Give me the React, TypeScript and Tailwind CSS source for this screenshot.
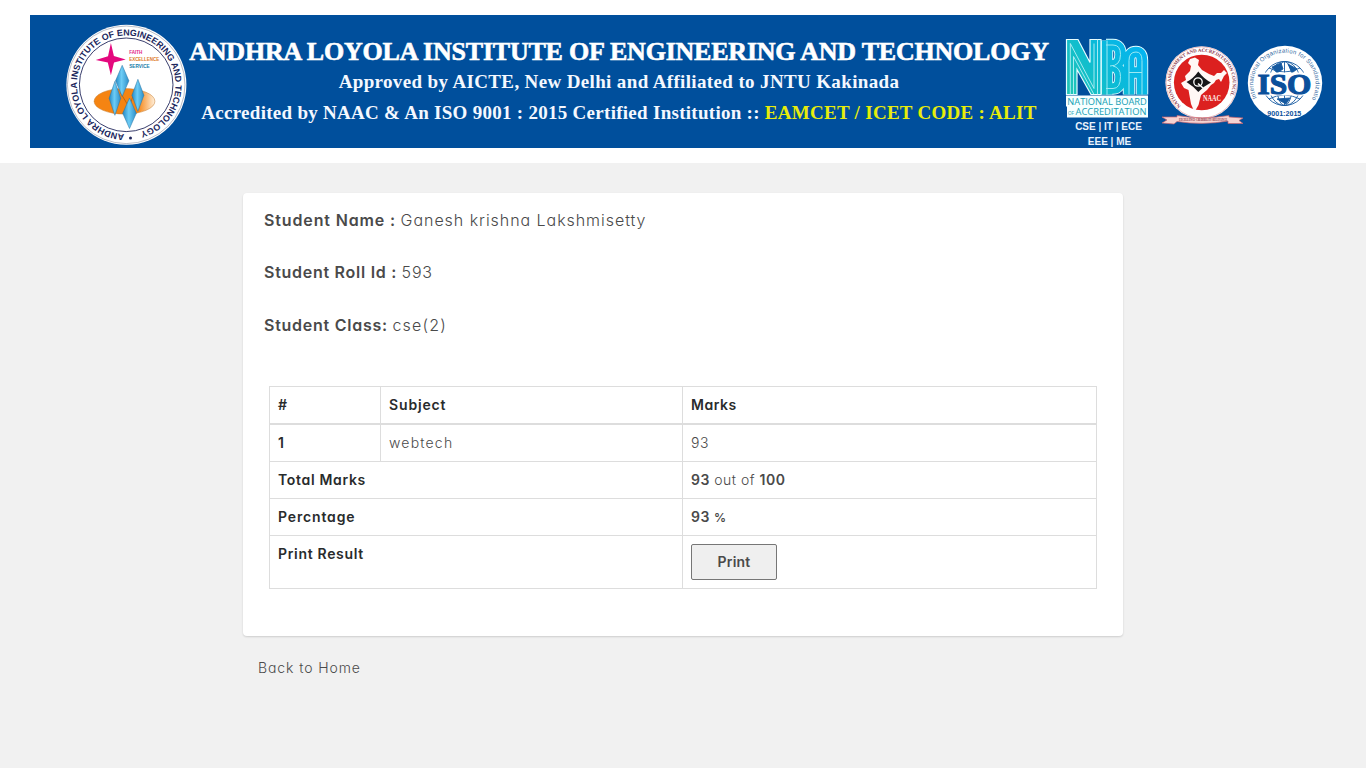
import React from "react";

function CollegeSeal() {
  const diamonds = [
    [122, 80.5, 6.7, 15.5],
    [114.7, 98, 5.8, 17],
    [137.7, 95, 6, 16],
    [129.3, 113, 6.8, 15.2],
  ];
  return (
    <svg className="h-[121px] w-[122px] shrink-0" viewBox="65.8 23.7 122 121" fontFamily="Liberation Sans, sans-serif" fontWeight="bold">
      <defs>
        <linearGradient id="gem" x1="0" x2="1">
          <stop offset="0" stopColor="#2389c6" />
          <stop offset=".45" stopColor="#6cccf5" />
          <stop offset="1" stopColor="#2c8ec8" />
        </linearGradient>
        <linearGradient id="disc" x1="0" x2="1">
          <stop offset=".72" stopColor="#f58412" />
          <stop offset="1" stopColor="#fff0dc" />
        </linearGradient>
        <path id="sealArc" d="M126 133.8 A49.3 49.3 0 0 1 126 35.2 A49.3 49.3 0 0 1 126 133.8" />
      </defs>
      <circle cx="126.2" cy="84.5" r="60" fill="#fff" />
      <circle cx="126" cy="84.5" r="58.8" fill="none" stroke="#8a90a3" strokeWidth=".6" />
      <circle cx="126" cy="84.5" r="46.8" fill="none" stroke="#23285c" strokeWidth=".9" />
      <text fontSize="8.9" fill="#20265c">
        <textPath href="#sealArc" startOffset="2" textLength="293">ANDHRA LOYOLA INSTITUTE OF ENGINEERING AND TECHNOLOGY</textPath>
      </text>
      <circle cx="130.3" cy="137.6" r="1.5" fill="#20265c" />
      <path d="M110.7 42.7 L113.7 55.8 L125.5 59.3 L113.8 62.2 L110.7 75 L107.6 62.2 L95.5 59.6 L107.8 56Z" fill="#e4087e" />
      <g fontSize="5.9">
        <text x="129" y="53.6" textLength="13" lengthAdjust="spacingAndGlyphs" fill="#e02183">FAITH</text>
        <text x="129" y="61" textLength="30" lengthAdjust="spacingAndGlyphs" fill="#dc791f">EXCELLENCE</text>
        <text x="129" y="68.2" textLength="20.5" lengthAdjust="spacingAndGlyphs" fill="#187ba8">SERVICE</text>
      </g>
      <ellipse cx="124.3" cy="101" rx="30.4" ry="12.8" fill="url(#disc)" stroke="#c47a2a" strokeWidth=".5" />
      <path d="M120 92 L129 107 L134 92" fill="none" stroke="#a85912" strokeWidth=".7" />
      {diamonds.map(([x, y, w, h]) => (
        <path key={x} d={`M${x} ${y - h} L${x + w} ${y} L${x} ${y + h} L${x - w} ${y}Z`} fill="url(#gem)" stroke="#2873a3" strokeWidth=".5" />
      ))}
    </svg>
  );
}

function NbaLogo() {
  const curves = "M1129 94 V60 Q1129 51.5 1136 51.5 Q1142 51.5 1142 60 V94 M1129 72 H1142 M1106 44.5 H1113 Q1120.5 44.5 1120.5 54 Q1120.5 65.5 1110 65.5 M1113 65.5 Q1120.5 67 1120.5 76 Q1120.5 88 1113 88 H1106 M1107 40 V94";
  return (
    <svg className="h-[82px] w-[86px]" viewBox="1064 37.5 86 82" fontFamily="Open Sans, sans-serif" fontWeight="normal">
      <defs>
        <linearGradient id="nba" gradientUnits="userSpaceOnUse" x1="1070" y1="90" x2="1140" y2="45">
          <stop stopColor="#20c5b7" />
          <stop offset=".5" stopColor="#0bbbd6" />
          <stop offset="1" stopColor="#05b4f1" />
        </linearGradient>
      </defs>
      <g fill="none">
        <path d={curves} stroke="#e6fdff" strokeWidth="12.4" />
        <path d={curves} stroke="url(#nba)" strokeWidth="10.6" />
        <path d={curves} stroke="#9be9f3" strokeWidth="1" />
      </g>
      <path d="M1066.5 39 H1078 L1090 62 V39 H1101 V94 H1091 L1077 69 V94 H1066.5Z" fill="url(#nba)" stroke="#e6fdff" strokeWidth="1.2" />
      <path d="M1070.3 94 V43 L1094 88 V43 M1073.5 94 V56 L1094 94 M1097.5 39 V94" fill="none" stroke="#b5eff6" strokeWidth=".9" />
      <path d="M1067 96 H1147 V116 H1068 V105 H1067Z" fill="#f7ffff" stroke="#f7ffff" strokeWidth="2" />
      <g fill="#169fb4">
        <text x="1067.3" y="104.4" fontSize="9.6" textLength="79.5" lengthAdjust="spacingAndGlyphs">NATIONAL BOARD</text>
        <text x="1068" y="114.3" fontSize="6" textLength="6" lengthAdjust="spacingAndGlyphs">OF</text>
        <text x="1075.5" y="114.3" fontSize="9.6" textLength="71" lengthAdjust="spacingAndGlyphs">ACCREDITATION</text>
      </g>
    </svg>
  );
}

function NaacLogo() {
  return (
    <svg className="h-[82px] w-[84px]" viewBox="1161 45 84 82" fontFamily="Liberation Serif, serif" fontWeight="bold">
      <defs>
        <path id="naacArc" d="M1181.8 106.5 A31 31 0 1 1 1221.6 106.5" />
      </defs>
      <circle cx="1201.7" cy="82.5" r="36.3" fill="#fff" />
      <circle cx="1201.7" cy="82.5" r="35.6" fill="none" stroke="#d97a80" strokeWidth=".5" />
      <circle cx="1201.7" cy="82.5" r="27.8" fill="#dc201f" />
      <text fontSize="4.9" fill="#8a3449">
        <textPath href="#naacArc" startOffset="1" textLength="136">NATIONAL ASSESSMENT AND ACCREDITATION COUNCIL</textPath>
      </text>
      <path d="M1190 59 L1195 57.5 L1199 60 L1198 65 L1202 70 L1209 74 L1214 76 L1217 73 L1221 73 L1224 70 L1227 73 L1224 76 L1221 82 L1219 79 L1216 80 L1214 83 L1211 85 L1207 90 L1201 95 L1198.5 105 L1194.5 112 L1191 104 L1188.5 90 L1184 88 L1181 83 L1186 80 L1185 76 L1190 71 L1191 66 L1188 63Z" fill="#fff8f6" />
      <path d="M1186.5 82 Q1193 79 1198.3 71.5 Q1204 79 1211 82.5 Q1204 86 1198.3 92 Q1193 86 1186.5 82Z" fill="#17171a" />
      <circle cx="1198" cy="82" r="4.2" fill="#111" stroke="#fff" strokeWidth="1.3" />
      <path d="M1198 83.5 L1203 88" stroke="#fff" strokeWidth="1.5" />
      <text x="1203" y="101.3" fontSize="7.5" fill="#ffeeea" textLength="18" lengthAdjust="spacingAndGlyphs">NAAC</text>
      <path d="M1162 117 H1177 V115.5 Q1202 120 1229 115.5 V117 L1243 118 L1239 120.5 L1243 123.5 H1228 V121 Q1203 125.5 1177 121.5 L1174 124 L1162 123 L1167 120Z" fill="#f6d3d1" stroke="#c8636d" strokeWidth=".7" />
      <text x="1179" y="121.3" fontSize="3.6" fill="#842f40" textLength="48" lengthAdjust="spacingAndGlyphs">EXCELLENCE·CREDIBILITY·RELEVANCE</text>
    </svg>
  );
}

function IsoLogo() {
  return (
    <svg className="h-[76px] w-[76px]" viewBox="1247 45 76 76" fontFamily="Liberation Sans, sans-serif">
      <defs>
        <path id="isoArc" d="M1256.7 98 A31.2 31.2 0 1 1 1312.3 98" />
      </defs>
      <circle cx="1285" cy="83" r="37.2" fill="#fff" />
      <text fontSize="6" fill="#336aa2">
        <textPath href="#isoArc" startOffset="0" textLength="132">International Organization for Standardization</textPath>
      </text>
      <g fill="none" stroke="#1559a0" strokeWidth=".9">
        <circle cx="1284.5" cy="83.5" r="22" />
        <ellipse cx="1284.5" cy="83.5" rx="8" ry="22" />
        <ellipse cx="1284.5" cy="83.5" rx="16" ry="22" />
        <path d="M1284.5 61.5 V105.5 M1269 68 Q1284 76 1300 68 M1265 73 Q1284 82 1304 73 M1269 99 Q1284 91 1300 99" />
        <path d="M1272 67 L1281 63 L1283 69 L1277 73Z M1288 64 L1297 69 L1292 73Z M1277 99 L1290 98 L1286 104Z" fill="#1559a0" />
      </g>
      <path d="M1256 72.5 H1313 V95.5 H1256Z" fill="#fff" />
      <text x="1257.5" y="93.8" fontSize="30" fontFamily="Liberation Serif, serif" fontWeight="bold" fill="#0a4f9b" stroke="#0a4f9b" strokeWidth="1.2" textLength="54" lengthAdjust="spacingAndGlyphs">ISO</text>
      <text x="1267.3" y="115.8" fontSize="7.3" fontWeight="bold" fill="#0a4f9b" textLength="34" lengthAdjust="spacingAndGlyphs">9001:2015</text>
    </svg>
  );
}

function Banner() {
  return (
    <div className="flex h-[133px] overflow-hidden bg-[#004f9c]">
      <div className="w-[158px] shrink-0 pt-[9px] pl-[35.5px]">
        <CollegeSeal />
      </div>
      <div className="flex w-[862px] shrink-0 flex-col items-center pt-[21px] font-['Liberation_Serif',serif] font-bold whitespace-nowrap text-[#f4f8ff]">
        <div className="text-[26px] leading-[31px] tracking-[-0.22px] text-white [-webkit-text-stroke:0.6px_white]">ANDHRA LOYOLA INSTITUTE OF ENGINEERING AND TECHNOLOGY</div>
        <div className="text-[19px] leading-[30px] tracking-[0.36px]">Approved by AICTE, New Delhi and Affiliated to JNTU Kakinada</div>
        <div className="text-[19px] leading-8 tracking-[0.28px]">
          Accredited by NAAC &amp; An ISO 9001 : 2015 Certified Institution :: <span className="text-[#e7ed0b]">EAMCET / ICET CODE : ALIT</span>
        </div>
      </div>
      <div className="ml-[14px] w-[86px] shrink-0 pt-[23px] text-center font-['Liberation_Sans',sans-serif] text-[10px] leading-[15px] font-bold whitespace-nowrap text-[#eaf3fc]">
        <NbaLogo />
        <div className="-mt-px pl-[3px]">CSE | IT | ECE</div>
        <div className="pl-[5px]">EEE | ME</div>
      </div>
      <div className="ml-[11px] shrink-0 pt-[30px]">
        <NaacLogo />
      </div>
      <div className="ml-[2px] shrink-0 pt-[30px]">
        <IsoLogo />
      </div>
    </div>
  );
}

const cell = "border border-[#ddd] px-2 pt-0 pb-px text-left";
const head = "font-semibold text-[#292b2c]";

export default function App() {
  return (
    <div className="min-h-screen bg-[#f1f1f1] font-['Inter',sans-serif] text-[14px] font-light text-[#4a4a4a] [font-feature-settings:'cv11']">
      <header className="h-[163px] bg-white px-[30px] py-[15px]">
        <Banner />
      </header>
      <main className="mx-auto w-[880px] pt-[30px]">
        <section className="h-[443px] rounded-[4px] bg-white px-[21px] pt-[15px] shadow-[0_1px_2px_rgba(0,0,0,0.15)]">
          <div className="h-[178px] text-[16px] leading-6 whitespace-nowrap">
            <p className="mb-[28px]"><b className="font-semibold tracking-[0.87px]">Student Name :</b> <span className="tracking-[0.95px]">Ganesh krishna Lakshmisetty</span></p>
            <p className="mb-[29px]"><b className="font-semibold tracking-[0.73px]">Student Roll Id :</b> <span className="tracking-[0.8px]">593</span></p>
            <p><b className="font-semibold tracking-[0.75px]">Student Class:</b> <span className="tracking-[1.2px]">cse(2)</span></p>
          </div>
          <table className="ml-[5px] w-[827px] table-fixed border-collapse leading-[21px] tracking-[0.5px]">
            <colgroup>
              <col className="w-[111px]" />
              <col className="w-[302px]" />
              <col className="w-[414px]" />
            </colgroup>
            <thead>
              <tr className="h-[37px]">
                <th className={`${cell} ${head} border-b-2`}>#</th>
                <th className={`${cell} ${head} border-b-2 tracking-[0.85px]`}>Subject</th>
                <th className={`${cell} ${head} border-b-2`}>Marks</th>
              </tr>
            </thead>
            <tbody>
              <tr className="h-[38px]">
                <th className={`${cell} ${head}`}>1</th>
                <td className={`${cell} tracking-[1.2px]`}>webtech</td>
                <td className={cell}>93</td>
              </tr>
              <tr className="h-[37px]">
                <th colSpan={2} className={`${cell} ${head} tracking-[0.68px]`}>Total Marks</th>
                <td className={cell}><b className="font-semibold">93</b> out of <b className="font-semibold">100</b></td>
              </tr>
              <tr className="h-[37px]">
                <th colSpan={2} className={`${cell} ${head} tracking-[0.85px]`}>Percntage</th>
                <td className={cell}><b className="font-semibold">93 <span className="text-[12px]">%</span></b></td>
              </tr>
              <tr className="h-[53px]">
                <th colSpan={2} className="border border-[#ddd] px-2 pt-[7px] pb-0 text-left align-top font-semibold tracking-[0.68px] text-[#292b2c]">Print Result</th>
                <td className="border border-[#ddd] px-2 py-0 text-left">
                  <button className="block h-9 w-[86px] rounded-[2px] border border-[#767676] bg-[#efefef] pb-0.5 font-semibold tracking-[0.2px]">Print</button>
                </td>
              </tr>
            </tbody>
          </table>
        </section>
        <a href="#" className="mt-[21px] ml-[15px] block w-fit leading-[21px] tracking-[0.9px]">Back to Home</a>
      </main>
    </div>
  );
}
